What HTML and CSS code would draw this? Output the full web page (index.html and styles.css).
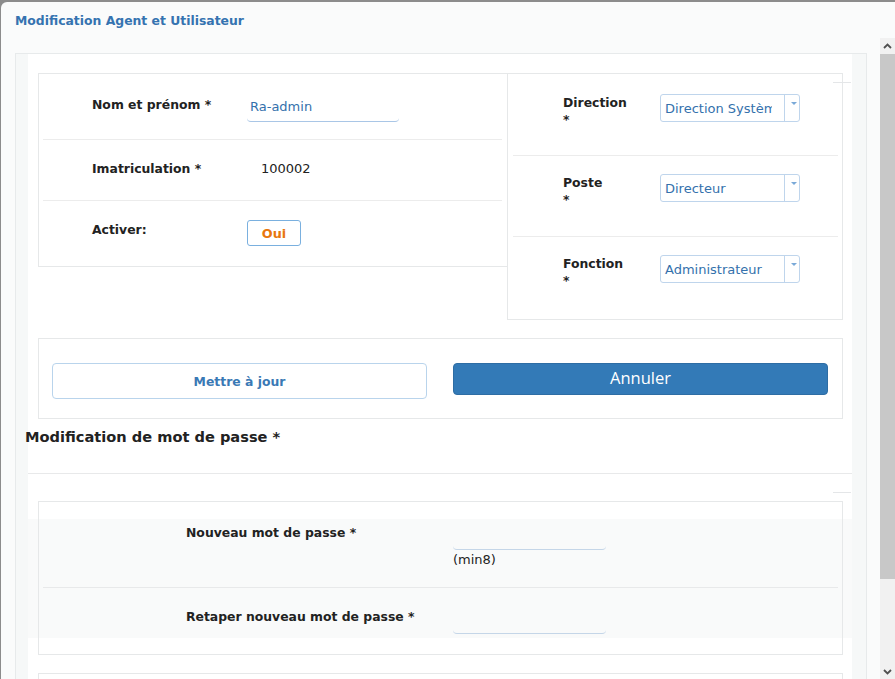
FILE: index.html
```html
<!DOCTYPE html>
<html lang="fr">
<head>
<meta charset="utf-8">
<title>Modification Agent et Utilisateur</title>
<link rel="stylesheet" href="styles.css">
</head>
<body>
<div class="dialog">
  <div class="dlg-header">
    <h4 class="dlg-title">Modification Agent et Utilisateur</h4>
  </div>
  <div class="dlg-body">
    <div class="scroll-content">
      <div class="panel">
        <div class="panel-inner">
          <span class="tick tick-top"></span>
          <span class="tick tick-mid"></span>
          <div class="top-row">
            <div class="card card-left">
              <div class="lrow lrow-1">
                <label class="lbl">Nom et prénom *</label>
                <input class="txt" type="text" value="Ra-admin">
              </div>
              <div class="lrow lrow-2">
                <label class="lbl">Imatriculation *</label>
                <span class="static">100002</span>
              </div>
              <div class="lrow lrow-3">
                <label class="lbl">Activer:</label>
                <button class="btn-oui" type="button">Oui</button>
              </div>
            </div>
            <div class="card card-right">
              <div class="rrow rrow-1">
                <label class="rlbl">Direction<span class="star">*</span></label>
                <div class="select"><span class="sel-text">Direction Systèmes d'Information</span><span class="sel-arrow"></span></div>
              </div>
              <div class="rrow rrow-2">
                <label class="rlbl">Poste<span class="star">*</span></label>
                <div class="select"><span class="sel-text">Directeur</span><span class="sel-arrow"></span></div>
              </div>
              <div class="rrow rrow-3">
                <label class="rlbl">Fonction<span class="star">*</span></label>
                <div class="select"><span class="sel-text">Administrateur</span><span class="sel-arrow"></span></div>
              </div>
            </div>
          </div>

          <div class="card actions">
            <button class="btn-update" type="button">Mettre à jour</button>
            <button class="btn-cancel" type="button">Annuler</button>
          </div>

          <h3 class="section-title">Modification de mot de passe *</h3>
          <hr class="sep">

          <div class="card pwd">
            <div class="pwd-band">
              <div class="prow prow-1">
                <label class="lbl plbl">Nouveau mot de passe *</label>
                <div class="pfield">
                  <input class="ptxt" type="password">
                  <span class="hint">(min8)</span>
                </div>
              </div>
              <div class="prow prow-2">
                <label class="lbl plbl">Retaper nouveau mot de passe *</label>
                <div class="pfield">
                  <input class="ptxt" type="password">
                </div>
              </div>
            </div>
          </div>

          <div class="card last"></div>
        </div>
      </div>
    </div>
    <div class="vscroll" aria-hidden="true">
      <div class="sb-btn">
        <svg width="9" height="6" viewBox="0 0 9 6"><path d="M1 5 L4.5 1.5 L8 5" fill="none" stroke="#505050" stroke-width="1.8"/></svg>
      </div>
      <div class="sb-track"><div class="sb-thumb"></div></div>
      <div class="sb-btn">
        <svg width="9" height="6" viewBox="0 0 9 6"><path d="M1 1 L4.5 4.5 L8 1" fill="none" stroke="#505050" stroke-width="1.8"/></svg>
      </div>
    </div>
  </div>
</div>
</body>
</html>
```

FILE: styles.css
```css
* { box-sizing: border-box; }
html, body { margin: 0; padding: 0; }
body {
  background: #8c8c8c;
  width: 895px;
  height: 679px;
  overflow: hidden;
  font-family: "DejaVu Sans", Verdana, sans-serif;
  font-size: 13px;
  color: #222;
}
.dialog {
  margin: 2px 0 0 1px;
  width: 894px;
  height: 677px;
  background: #fafbfb;
  border-radius: 6px 0 0 0;
  display: flex;
  flex-direction: column;
}
.dlg-header {
  flex: none;
  height: 36px;
  padding-left: 14px;
  display: flex;
  align-items: center;
}
.dlg-title {
  margin: 0;
  font-size: 12.4px;
  font-weight: bold;
  color: #3573b0;
}
.dlg-body {
  flex: 1;
  min-height: 0;
  display: flex;
}
.scroll-content {
  flex: 1;
  min-width: 0;
  overflow: hidden;
}

/* scrollbar */
.vscroll {
  flex: none;
  width: 15px;
  display: flex;
  flex-direction: column;
  background: #f1f1f1;
}
.sb-btn {
  flex: none;
  height: 15px;
  display: flex;
  align-items: center;
  justify-content: center;
}
.sb-track {
  flex: 1;
  padding: 1px 0 0 0;
}
.sb-thumb {
  height: 525px;
  background: #c8c8c8;
}

.panel {
  margin: 15px 13px 9px 14px;
  border: 1px solid #e7eaeb;
  background: #f6f8f8;
  padding: 0 14px 0 12px;
}
.panel-inner {
  position: relative;
  z-index: 0;
  background: #ffffff;
  padding: 19px 9px 10px 10px;
}
.tick {
  position: absolute;
  left: 805px;
  width: 18px;
  height: 1px;
  background: #e4e6e8;
}
.tick-top { top: 28px; }
.tick-mid { top: 438px; }

.card {
  background: #fff;
  border: 1px solid #e6e8e9;
}
.top-row {
  display: flex;
  align-items: flex-start;
  margin-bottom: 18px;
}
.card-left {
  width: 469px;
  border-right: none;
}
.card-right {
  flex: 1;
}
.lbl {
  font-size: 12.4px;
  font-weight: bold;
  line-height: 17px;
  color: #222;
}
.lrow {
  margin: 0 5px 0 4px;
  padding-left: 49px;
  display: flex;
  align-items: flex-start;
  border-bottom: 1px solid #ececec;
}
.lrow .lbl { width: 155px; flex: none; }
.lrow-1 { height: 66px; padding-top: 18px; }
.lrow-1 .lbl { margin-top: 4px; }
.lrow-2 { height: 61px; padding-top: 20px; }
.lrow-3 { height: 65px; padding-top: 19px; border-bottom: none; }
.lrow-3 .lbl { margin-top: 1px; }
.txt {
  width: 152px;
  height: 30px;
  border: none;
  border-bottom: 1px solid #a9c6e6;
  border-radius: 0 0 4px 4px;
  padding: 0 3px;
  font-family: "DejaVu Sans", Verdana, sans-serif;
  font-size: 13px;
  color: #3471ac;
  background: transparent;
  outline: none;
}
.static {
  padding-left: 14px;
  line-height: 17px;
  font-size: 13px;
  color: #222;
}
.btn-oui {
  width: 54px;
  height: 26px;
  padding: 0;
  border: 1px solid #7ab0df;
  border-radius: 3px;
  background: #fff;
  color: #e8770e;
  font-family: "DejaVu Sans", Verdana, sans-serif;
  font-size: 12.8px;
  font-weight: bold;
}

.rrow {
  margin: 0 4px 0 5px;
  padding-left: 50px;
  display: flex;
  align-items: flex-start;
  border-bottom: 1px solid #ececec;
}
.rrow-1 { height: 82px; padding-top: 20px; }
.rrow-2 { height: 81px; padding-top: 18px; }
.rrow-3 { height: 82px; padding-top: 18px; border-bottom: none; }
.rlbl {
  width: 72px;
  margin-right: 25px;
  font-size: 12.4px;
  font-weight: bold;
  line-height: 17px;
  color: #222;
}
.star { display: block; }
.select {
  position: relative;
  width: 140px;
  height: 28px;
  border: 1px solid #bfd5ec;
  border-radius: 3px;
  background: #fff;
  display: flex;
  align-items: center;
}
.sel-text {
  width: 111px;
  padding-left: 4px;
  overflow: hidden;
  white-space: nowrap;
  color: #3471ac;
  font-size: 13px;
}
.sel-arrow {
  position: absolute;
  right: 0;
  top: 0;
  bottom: 0;
  width: 15px;
  border-left: 1px solid #bfd5ec;
}
.sel-arrow::after {
  content: "";
  position: absolute;
  left: 6px;
  top: 7px;
  border-left: 3px solid transparent;
  border-right: 3px solid transparent;
  border-top: 3px solid #7aa9d8;
}

.actions {
  display: flex;
  align-items: flex-start;
  gap: 26px;
  padding: 24px 13px 19px 13px;
}
.btn-update {
  width: 375px;
  height: 36px;
  border: 1px solid #b9d4ec;
  border-radius: 4px;
  background: #fff;
  color: #3a79b5;
  font-family: "DejaVu Sans", Verdana, sans-serif;
  font-size: 12.4px;
  font-weight: bold;
  padding: 0;
}
.btn-cancel {
  width: 375px;
  height: 32px;
  border: 1px solid #2e6da4;
  border-radius: 4px;
  background: #337ab7;
  color: #fff;
  font-family: "Open Sans", sans-serif;
  font-size: 16.5px;
  padding: 0 0 3px 0;
}

.section-title {
  margin: 8px 0 0 -13px;
  font-size: 14.6px;
  font-weight: bold;
  line-height: 20px;
  color: #222;
}
.sep {
  margin: 26px -9px 0 -10px;
  border: none;
  border-top: 1px solid #e8e9ea;
  height: 0;
}
.pwd {
  margin-top: 27px;
  padding: 17px 0 16px 0;
  background: transparent;
}
.pwd-band {
  position: relative;
}
.pwd-band::before {
  content: "";
  position: absolute;
  top: 0;
  bottom: 0;
  left: -11px;
  right: -10px;
  background: #f9fafa;
  z-index: -1;
}
.prow {
  margin: 0 4px;
  padding-left: 143px;
  display: flex;
  align-items: flex-start;
}
.plbl { width: 267px; flex: none; }
.prow-1 { height: 69px; padding-top: 5px; border-bottom: 1px solid #e8e9ea; }
.prow-1 .pfield { margin-top: -2px; }
.prow-2 { height: 50px; padding-top: 20px; }
.prow-2 .pfield { margin-top: -2px; }
.pfield { display: flex; flex-direction: column; }
.ptxt {
  width: 153px;
  height: 28px;
  border: none;
  border-bottom: 1px solid #c5d6e8;
  border-radius: 0 0 4px 4px;
  background: transparent;
  outline: none;
}
.hint {
  margin-top: 2px;
  line-height: 16px;
  font-size: 13px;
  color: #222;
}
.last {
  margin-top: 18px;
  height: 95px;
}
```
